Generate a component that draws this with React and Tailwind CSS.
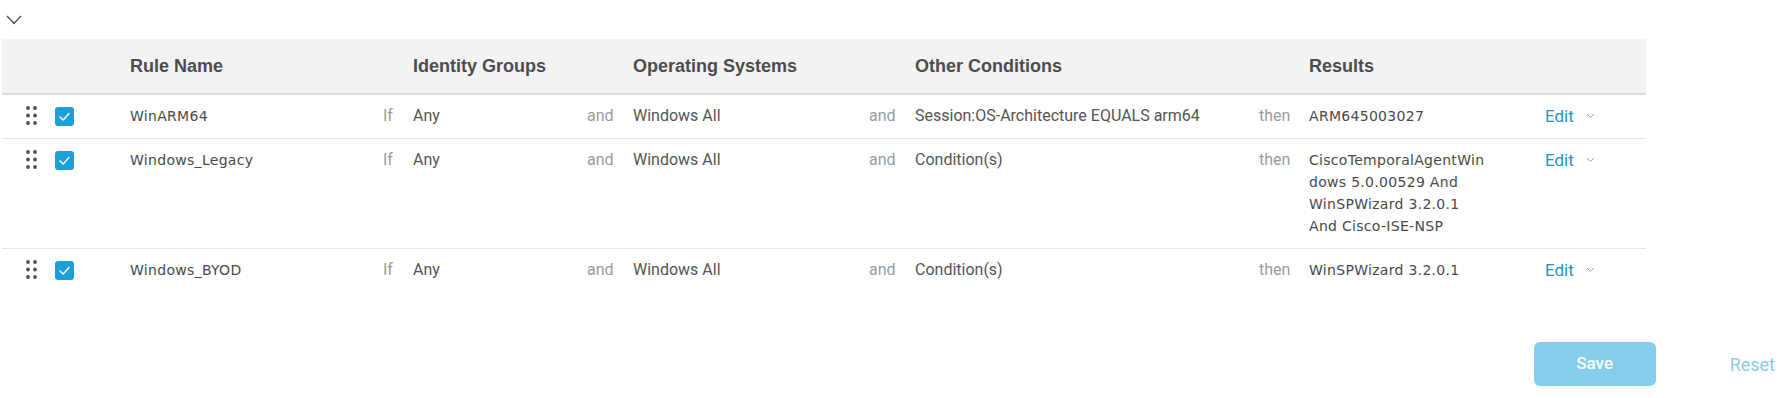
import React from "react";

const COLS =
  "grid grid-cols-[53px_75px_253px_30px_174px_46px_236px_46px_344px_50px_236px_101px]";

const wide = { fontFamily: '"DejaVu Sans", sans-serif' };

function Dots() {
  return (
    <svg width="12" height="20" viewBox="0 0 12 20" className="block">
      {[
        [2, 2],
        [9, 2],
        [2, 9.5],
        [9, 9.5],
        [2, 17],
        [9, 17],
      ].map(([x, y], i) => (
        <circle key={i} cx={x} cy={y} r="1.9" fill="#505050" />
      ))}
    </svg>
  );
}

function Check() {
  return (
    <div className="w-[19px] h-[19px] rounded-[3px] bg-[#1ba0d7] flex items-center justify-center">
      <svg width="19" height="19" viewBox="0 0 19 19">
        <polyline
          points="5,10 8.2,13 14,6.5"
          fill="none"
          stroke="#fff"
          strokeWidth="1.4"
          strokeLinecap="round"
          strokeLinejoin="round"
        />
      </svg>
    </div>
  );
}

function SmallChevron() {
  return (
    <svg width="9" height="6" viewBox="0 0 9 6" className="block">
      <polyline points="1,1 4.5,4.5 8,1" fill="none" stroke="#9aa0a6" strokeWidth="1" />
    </svg>
  );
}

function Row({ name, results, last }) {
  return (
    <div
      className={`${COLS} pt-[10px] pb-[11px] ${last ? "" : "border-b border-[#e3e3e3]"} items-start text-[16px] leading-[22px] text-[#555]`}
      style={{ fontFamily: "Roboto, sans-serif" }}
    >
      <div className="pl-[24px] h-[22px] flex items-center">
        <Dots />
      </div>
      <div className="h-[22px] flex items-center">
        <Check />
      </div>
      <div className="text-[14px] tracking-[0.3px] text-[#4a4a4a]" style={wide}>
        {name}
      </div>
      <div className="text-[#9b9b9b]">If</div>
      <div>Any</div>
      <div className="text-[#9b9b9b]">and</div>
      <div>Windows All</div>
      <div className="text-[#9b9b9b]">and</div>
      <div>{results.cond}</div>
      <div className="text-[#9b9b9b]">then</div>
      <div className="text-[14px] tracking-[0.3px] text-[#4a4a4a]" style={wide}>
        {results.lines.map((l, i) => (
          <div key={i}>{l}</div>
        ))}
      </div>
      <div className="flex items-center gap-[12px] h-[22px]">
        <span className="text-[17px] text-[#2a92c4]">Edit</span>
        <SmallChevron />
      </div>
    </div>
  );
}

export default function App() {
  return (
    <div className="w-[1791px] h-[398px] bg-white relative">
      <div className="h-[39px] pt-[15px] pl-[6px]">
        <svg width="16" height="10" viewBox="0 0 16 10" className="block">
          <polyline points="1,1 8,8.5 15,1" fill="none" stroke="#4a4a4a" strokeWidth="1.2" />
        </svg>
      </div>
      <div className="ml-[2px] w-[1644px]">
        <div
          className={`${COLS} h-[56px] items-center bg-[#f3f3f4] border-b-2 border-[#dcdcdc] text-[18px] font-bold text-[#4d4d4d]`}
          style={{ fontFamily: '"Liberation Sans", Arial, sans-serif' }}
        >
          <div />
          <div />
          <div>Rule Name</div>
          <div />
          <div>Identity Groups</div>
          <div />
          <div>Operating Systems</div>
          <div />
          <div>Other Conditions</div>
          <div />
          <div>Results</div>
          <div />
        </div>
        <Row
          name="WinARM64"
          results={{ cond: "Session:OS-Architecture EQUALS arm64", lines: ["ARM645003027"] }}
        />
        <Row
          name="Windows_Legacy"
          results={{
            cond: "Condition(s)",
            lines: [
              "CiscoTemporalAgentWin",
              "dows 5.0.00529 And",
              "WinSPWizard 3.2.0.1",
              "And Cisco-ISE-NSP",
            ],
          }}
        />
        <Row
          name="Windows_BYOD"
          last
          results={{ cond: "Condition(s)", lines: ["WinSPWizard 3.2.0.1"] }}
        />
      </div>
      <div
        className="flex justify-end items-center mt-[50px] pr-[16px]"
        style={{ fontFamily: "Roboto, sans-serif" }}
      >
        <button className="w-[122px] h-[44px] rounded-[6px] bg-[#84cdeb] text-white text-[17px] font-medium">
          Save
        </button>
        <span className="ml-[74px] text-[18px] text-[#8ecbe0]">Reset</span>
      </div>
    </div>
  );
}
